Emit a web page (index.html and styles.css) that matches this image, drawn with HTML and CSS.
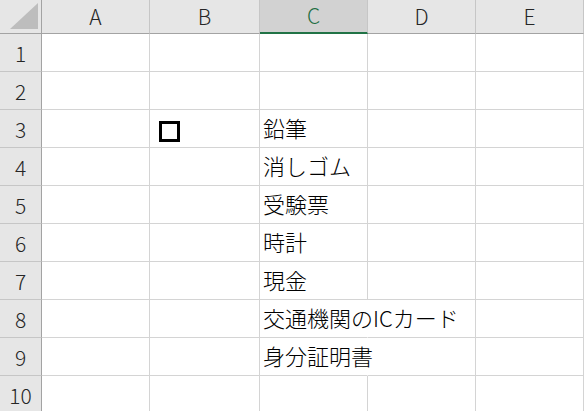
FILE: index.html
```html
<!DOCTYPE html>
<html>
<head>
  <title>Sheet1</title>
  <link rel="stylesheet" href="styles.css">
</head>
<body>

  <div class="sheet">
    <!-- column headers -->
    <div class="corner">
      <svg width="28" height="26" viewBox="0 0 28 26"><polygon points="0,26 28,0 28,26" fill="#bdbdbd"/></svg>
    </div>
    <div class="col-head">A</div>
    <div class="col-head">B</div>
    <div class="col-head active">C</div>
    <div class="col-head">D</div>
    <div class="col-head">E</div>

    <div class="row-head">1</div>
    <div class="cell"></div><div class="cell"></div><div class="cell"></div><div class="cell"></div><div class="cell"></div>

    <div class="row-head">2</div>
    <div class="cell"></div><div class="cell"></div><div class="cell"></div><div class="cell"></div><div class="cell"></div>

    <div class="row-head">3</div>
    <div class="cell"></div>
    <div class="cell"><span class="check"></span></div>
    <div class="cell">鉛筆</div>
    <div class="cell"></div><div class="cell"></div>

    <div class="row-head">4</div>
    <div class="cell"></div><div class="cell"></div>
    <div class="cell">消しゴム</div>
    <div class="cell"></div><div class="cell"></div>

    <div class="row-head">5</div>
    <div class="cell"></div><div class="cell"></div>
    <div class="cell">受験票</div>
    <div class="cell"></div><div class="cell"></div>

    <div class="row-head">6</div>
    <div class="cell"></div><div class="cell"></div>
    <div class="cell">時計</div>
    <div class="cell"></div><div class="cell"></div>

    <div class="row-head">7</div>
    <div class="cell"></div><div class="cell"></div>
    <div class="cell">現金</div>
    <div class="cell"></div><div class="cell"></div>

    <div class="row-head">8</div>
    <div class="cell"></div><div class="cell"></div>
    <div class="cell spill">交通機関のICカード</div>
    <div class="cell"></div><div class="cell"></div>

    <div class="row-head">9</div>
    <div class="cell"></div><div class="cell"></div>
    <div class="cell spill">身分証明書</div>
    <div class="cell"></div><div class="cell"></div>

    <div class="row-head">10</div>
    <div class="cell"></div><div class="cell"></div><div class="cell"></div><div class="cell"></div><div class="cell"></div>
  </div>

</body>
</html>
```

FILE: styles.css
```css
body {
  margin: 0;
  background: #fff;
  font-family: "Noto Sans CJK JP", sans-serif;
  overflow: hidden;
}

.sheet {
  display: grid;
  grid-template-columns: 42px 108px 110px 108px 108px 108px;
  grid-template-rows: 34px repeat(10, 38px);
  width: 584px;
}

.corner,
.col-head,
.row-head,
.cell {
  box-sizing: border-box;
  display: flex;
  align-items: center;
  white-space: nowrap;
}

.corner {
  background: #e6e6e6;
  justify-content: flex-end;
  align-items: flex-end;
  padding: 0 3px 4px 0;
  border-right: 1px solid #a3a3a3;
  border-bottom: 1px solid #a3a3a3;
}

.corner svg {
  display: block;
}

.col-head {
  justify-content: center;
  background: #e6e6e6;
  border-right: 1px solid #c6c6c6;
  border-bottom: 1px solid #a3a3a3;
  font-size: 21px;
  font-weight: 300;
  color: #262626;
  padding-bottom: 2px;
}

.col-head.active {
  background: #d2d2d2;
  color: #1e6e42;
  border-bottom: 2px solid #217346;
}

.row-head {
  justify-content: center;
  background: #e6e6e6;
  border-right: 1px solid #a3a3a3;
  border-bottom: 1px solid #c6c6c6;
  font-size: 21px;
  font-weight: 300;
  color: #262626;
}

.cell {
  border-right: 1px solid #d4d4d4;
  border-bottom: 1px solid #d4d4d4;
  padding: 0 0 3px 3px;
  font-size: 22px;
  font-weight: 300;
  color: #000;
}

/* text runs on into the empty cell at its right */
.cell.spill {
  border-right-color: transparent;
}

.check {
  display: inline-block;
  width: 21px;
  height: 21px;
  box-sizing: border-box;
  border: 3px solid #000;
  margin: 9px 0 0 6px;
}
```
